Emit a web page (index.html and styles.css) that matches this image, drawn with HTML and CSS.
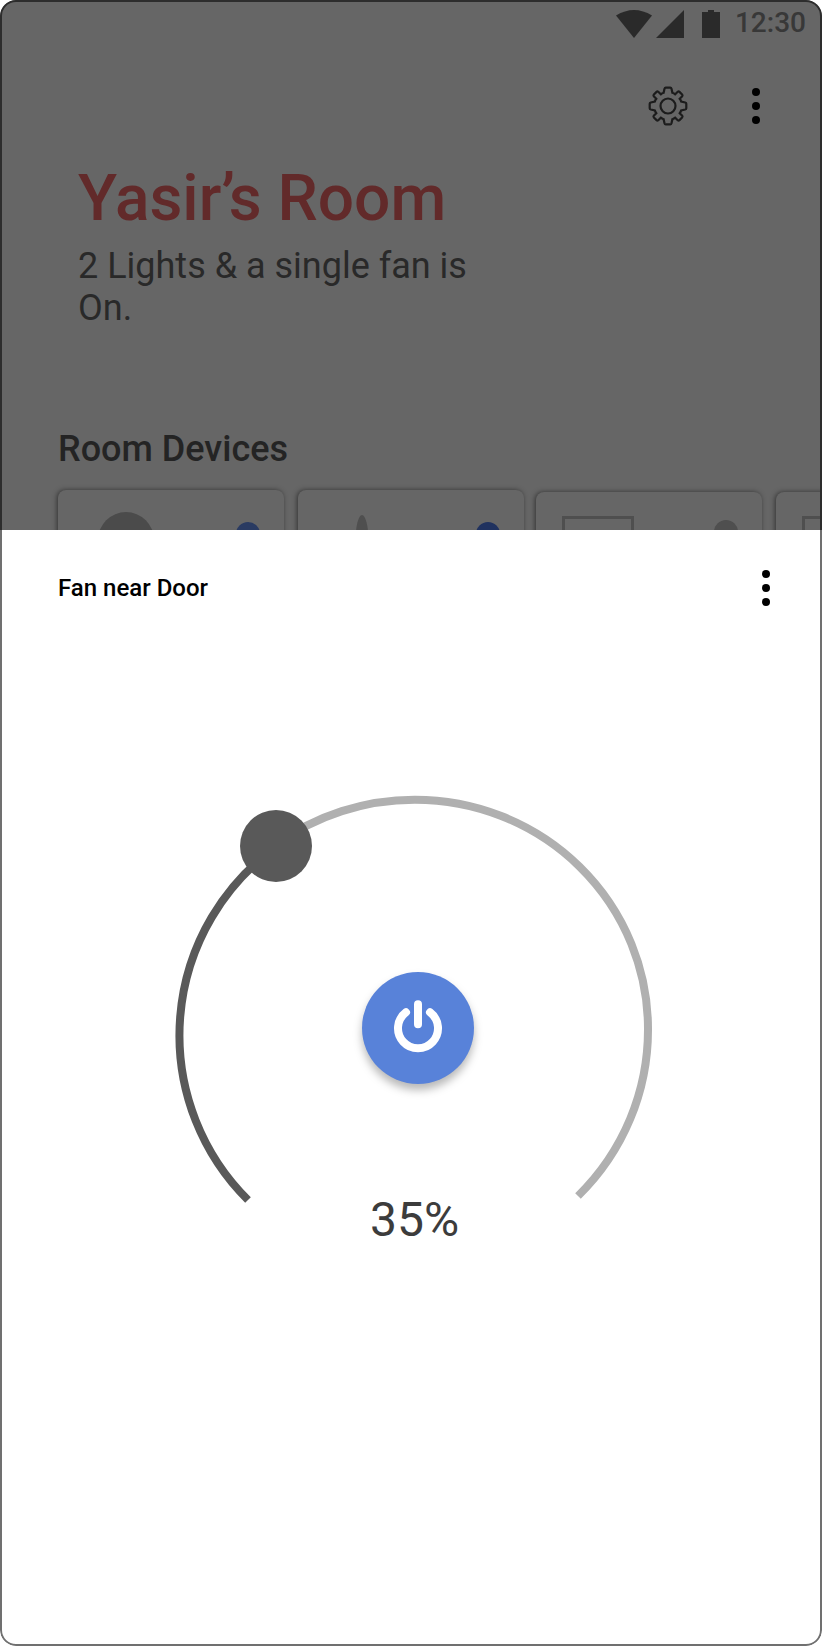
FILE: index.html
```html
<!DOCTYPE html>
<html lang="en">
<head>
<meta charset="utf-8">
<title>Yasir’s Room</title>
<link rel="stylesheet" href="styles.css">
</head>
<body>
<main class="phone">
  <section class="room">
    <div class="status">
      <svg class="status-icons" width="104" height="28" viewBox="616 10 104 28">
        <path d="M616 15.500Q634 4.500 652 15.500L634 38Z"/>
        <path d="M656 38L684 10V38Z"/>
        <path d="M702 12H708V10H714V12H720V38H702Z"/>
      </svg>
      <span class="clock">12:30</span>
    </div>
    <div class="toolbar">
      <svg class="gear" width="40" height="40" viewBox="-20 -20 40 40">
        <path d="M-3.500 -17.200Q-3.200 -18.300 -2.200 -18.300H2.200Q3.200 -18.300 3.500 -17.200L4.400 -13.200Q6 -12.700 7.200 -11.700L9.700 -14.200Q10.600 -14.900 11.500 -14.100L14.100 -11.500Q14.900 -10.600 14.200 -9.700L11.700 -7.200Q12.700 -6 13.200 -4.400L17.200 -3.500Q18.300 -3.200 18.300 -2.200V2.200Q18.300 3.200 17.200 3.500L13.200 4.400Q12.700 6 11.700 7.200L14.200 9.700Q14.900 10.600 14.100 11.500L11.500 14.100Q10.600 14.900 9.700 14.200L7.200 11.700Q6 12.700 4.400 13.200L3.500 17.200Q3.200 18.300 2.200 18.300H-2.200Q-3.200 18.300 -3.500 17.200L-4.400 13.200Q-6 12.700 -7.200 11.700L-9.700 14.200Q-10.600 14.900 -11.500 14.100L-14.100 11.500Q-14.900 10.600 -14.200 9.700L-11.700 7.200Q-12.700 6 -13.200 4.400L-17.200 3.500Q-18.300 3.200 -18.300 2.200V-2.200Q-18.300 -3.200 -17.200 -3.500L-13.200 -4.400Q-12.700 -6 -11.700 -7.200L-14.200 -9.700Q-14.900 -10.600 -14.100 -11.500L-11.500 -14.100Q-10.600 -14.900 -9.700 -14.200L-7.200 -11.700Q-6 -12.700 -4.400 -13.200Z"/>
        <circle r="7.500"/>
      </svg>
      <svg width="8" height="36" viewBox="0 0 8 36"><circle cx="4" cy="4" r="4"/><circle cx="4" cy="18" r="4"/><circle cx="4" cy="32" r="4"/></svg>
    </div>
    <h1 class="title">Yasir<span class="tight">’</span>s Room</h1>
    <p class="summary">2 Lights &amp; a single fan is On.</p>
    <h2 class="devices-title">Room Devices</h2>
    <div class="devices">
      <div class="card card-first"><svg width="226" height="120"><circle cx="68" cy="50" r="28" fill="#4b4b4b"/><circle cx="190" cy="44" r="12" fill="#2a3b62"/></svg></div>
      <div class="card card-second"><svg width="226" height="120"><ellipse cx="64" cy="51" rx="6.500" ry="26" fill="#4f4f4f"/><circle cx="190" cy="44" r="12" fill="#20325f"/></svg></div>
      <div class="card"><svg width="226" height="120"><rect x="27.500" y="25.500" width="69" height="50" fill="none" stroke="#4f4f4f" stroke-width="3"/><circle cx="190" cy="40" r="12" fill="#4f4f4f"/></svg></div>
      <div class="card"><svg width="226" height="120"><rect x="27.500" y="25.500" width="69" height="50" fill="none" stroke="#4f4f4f" stroke-width="3"/></svg></div>
    </div>
  </section>
  <section class="sheet">
    <header class="sheet-head">
      <h3 class="device-name">Fan near Door</h3>
      <svg width="8" height="36" viewBox="0 0 8 36"><circle cx="4" cy="4" r="4"/><circle cx="4" cy="18" r="4"/><circle cx="4" cy="32" r="4"/></svg>
    </header>
    <svg class="dial" width="500" height="420" viewBox="164 790 500 420" fill="none" stroke-width="8">
      <path d="M276 844.500A234 230.500 0 0 1 415 799.700A233 229 0 0 1 648 1028A234 233 0 0 1 578 1196" stroke="#b0b0b0"/>
      <path d="M248 1200A232 232 0 0 1 276 847" stroke="#595959"/>
      <circle cx="276" cy="846" r="36" fill="#595959"/>
      <circle class="power" cx="418" cy="1028" r="56" fill="#5882d9"/>
      <path d="M406 1012.300A20 20 0 1 0 430 1012.300M418 1004.300V1024.300" stroke="#fff" stroke-linecap="round"/>
    </svg>
    <p class="speed">35%</p>
  </section>
</main>
</body>
</html>
```
FILE: styles.css
```css
* { box-sizing: border-box; }
body { margin: 0; background: #fff; font-family: Roboto, sans-serif; }
h1, h2, h3, p { margin: 0; }
svg { display: block; flex: none; }
.phone {
  position: relative;
  width: 822px;
  height: 1646px;
  border-radius: 16px;
  overflow: hidden;
  background: #fff;
}
.phone::after {
  content: "";
  position: absolute;
  inset: 0;
  border: 2px solid #707070;
  border-radius: 16px;
  clip-path: inset(530px 0 0 0);
}
.room { position: relative; height: 530px; background: #666; overflow: hidden; }
.room::after {
  content: "";
  position: absolute;
  inset: 0;
  border: 2px solid #2d2d2d;
  border-bottom: 0;
  border-radius: 16px 16px 0 0;
}
.status { display: flex; justify-content: flex-end; height: 48px; padding: 10px 16px 0 0; }
.status-icons { fill: #2a2a2a; }
.clock { margin: -3px 0 0 15px; font-size: 28px; line-height: 32px; font-weight: 500; color: #383838; }
.toolbar { display: flex; justify-content: flex-end; align-items: center; height: 40px; margin-top: 38px; padding-right: 62px; gap: 64px; }
.gear { fill: none; stroke: #1c1c1c; stroke-width: 2.2; }
.title { margin: 35px 0 0 78px; font-size: 64px; line-height: 76px; font-weight: 500; color: #622a2a; }
/* Pulls the s under the apostrophe */
.tight { letter-spacing: -6.5px; }
.summary { width: 410px; margin: 8px 0 0 78px; font-size: 36px; line-height: 42px; color: #292929; }
.devices-title { margin: 99px 0 0 58px; font-size: 36px; line-height: 42px; font-weight: 500; color: #242424; }
.devices { display: flex; gap: 14px; padding-left: 58px; margin-top: 20px; }
.card { flex: none; width: 226px; height: 120px; margin-top: 2px; border-radius: 8px; background: #666; box-shadow: -1px 0 5px rgba(0, 0, 0, .5); overflow: hidden; }
.card-first, .card-second { margin-top: 0; }
.card-second { margin-right: -2px; }
.sheet { height: 1116px; background: #fff; }
.sheet-head { display: flex; justify-content: space-between; align-items: center; padding: 40px 52px 0 58px; height: 76px; }
.device-name { font-size: 24px; line-height: 28px; font-weight: 500; color: #000; }
.dial { margin: 184px 0 0 164px; overflow: visible; }
.power { filter: drop-shadow(0 6px 4px rgba(0, 0, 0, .28)); stroke: none; }
.speed { width: 829px; margin-top: -18px; text-align: center; font-size: 48px; line-height: 56px; color: #3c3c3c; }
```
